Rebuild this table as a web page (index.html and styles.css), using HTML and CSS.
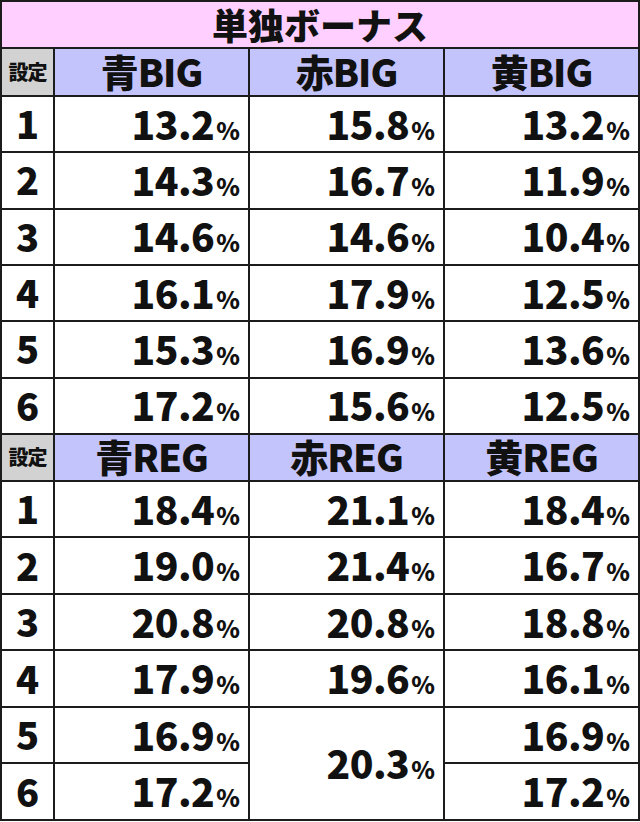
FILE: index.html
```html
<!DOCTYPE html>
<html lang="ja">
<head>
<meta charset="utf-8">
<title>単独ボーナス</title>
<link rel="stylesheet" href="styles.css">
</head>
<body>
<div class="grid">
  <div class="title">単独ボーナス</div>

  <div class="set">設定</div>
  <div class="head">青BIG</div>
  <div class="head">赤BIG</div>
  <div class="head">黄BIG</div>

  <div class="no">1</div><div class="val"><span>13.2<span class="pc">%</span></span></div><div class="val"><span>15.8<span class="pc">%</span></span></div><div class="val"><span>13.2<span class="pc">%</span></span></div>
  <div class="no">2</div><div class="val"><span>14.3<span class="pc">%</span></span></div><div class="val"><span>16.7<span class="pc">%</span></span></div><div class="val"><span>11.9<span class="pc">%</span></span></div>
  <div class="no">3</div><div class="val"><span>14.6<span class="pc">%</span></span></div><div class="val"><span>14.6<span class="pc">%</span></span></div><div class="val"><span>10.4<span class="pc">%</span></span></div>
  <div class="no">4</div><div class="val"><span>16.1<span class="pc">%</span></span></div><div class="val"><span>17.9<span class="pc">%</span></span></div><div class="val"><span>12.5<span class="pc">%</span></span></div>
  <div class="no">5</div><div class="val"><span>15.3<span class="pc">%</span></span></div><div class="val"><span>16.9<span class="pc">%</span></span></div><div class="val"><span>13.6<span class="pc">%</span></span></div>
  <div class="no">6</div><div class="val"><span>17.2<span class="pc">%</span></span></div><div class="val"><span>15.6<span class="pc">%</span></span></div><div class="val"><span>12.5<span class="pc">%</span></span></div>

  <div class="set">設定</div>
  <div class="head">青REG</div>
  <div class="head">赤REG</div>
  <div class="head">黄REG</div>

  <div class="no">1</div><div class="val"><span>18.4<span class="pc">%</span></span></div><div class="val"><span>21.1<span class="pc">%</span></span></div><div class="val"><span>18.4<span class="pc">%</span></span></div>
  <div class="no">2</div><div class="val"><span>19.0<span class="pc">%</span></span></div><div class="val"><span>21.4<span class="pc">%</span></span></div><div class="val"><span>16.7<span class="pc">%</span></span></div>
  <div class="no">3</div><div class="val"><span>20.8<span class="pc">%</span></span></div><div class="val"><span>20.8<span class="pc">%</span></span></div><div class="val"><span>18.8<span class="pc">%</span></span></div>
  <div class="no">4</div><div class="val"><span>17.9<span class="pc">%</span></span></div><div class="val"><span>19.6<span class="pc">%</span></span></div><div class="val"><span>16.1<span class="pc">%</span></span></div>
  <div class="no">5</div><div class="val"><span>16.9<span class="pc">%</span></span></div><div class="val merged"><span>20.3<span class="pc">%</span></span></div><div class="val"><span>16.9<span class="pc">%</span></span></div>
  <div class="no">6</div><div class="val"><span>17.2<span class="pc">%</span></span></div><div class="val"><span>17.2<span class="pc">%</span></span></div>
</div>
</body>
</html>
```

FILE: styles.css
```css
html, body {
  margin: 0;
  padding: 0;
  background: #ffffff;
}

.grid {
  display: grid;
  grid-template-columns: 51px 193px 193px 193px;
  grid-template-rows: 45px 46px repeat(6, 54.33px) 45px repeat(6, 54.5px);
  gap: 2px;
  padding: 2px;
  width: 640px;
  box-sizing: border-box;
  background: #1c1c1c;
  font-family: "Noto Sans CJK JP", "Noto Sans", sans-serif;
  font-weight: 900;
  color: #111111;
}

.grid > div {
  display: flex;
  align-items: center;
  background: #ffffff;
  line-height: 1;
}

.grid > .title {
  grid-column: 1 / -1;
  justify-content: center;
  background: #ffd0ff;
  font-size: 36px;
  padding-bottom: 2px;
}

.grid > .set {
  justify-content: center;
  background: #d2d2d2;
  font-size: 20px;
  letter-spacing: -1px;
}

.grid > .head {
  justify-content: center;
  background: #c4c4fc;
  font-size: 38px;
  letter-spacing: -1px;
  padding-bottom: 3px;
}

.no {
  justify-content: center;
  font-size: 38px;
  padding-bottom: 2px;
}

.val {
  justify-content: flex-end;
  padding-right: 8px;
  padding-bottom: 2px;
  font-size: 39px;
  letter-spacing: -0.5px;
}

.pc {
  font-size: 24px;
  margin-left: 2px;
  letter-spacing: 0;
}

.merged {
  grid-row: span 2;
}
```
